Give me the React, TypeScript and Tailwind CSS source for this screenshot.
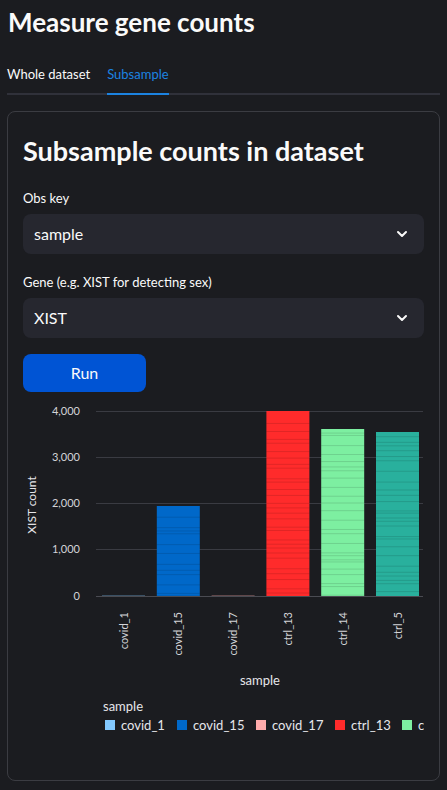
import { ChevronDown } from "lucide-react";

const bars = [
  { name: "covid_1", color: "#83c9ff", top: 195 },
  { name: "covid_15", color: "#0068c9", top: 106 },
  { name: "covid_17", color: "#ffabab", top: 195 },
  { name: "ctrl_13", color: "#ff2b2b", top: 11 },
  { name: "ctrl_14", color: "#7defa1", top: 29 },
  { name: "ctrl_5", color: "#29b09d", top: 32 },
];

// simple seeded noise for the stacked stripes
function stripes(seed: number, top: number, bottom: number) {
  const out: number[] = [];
  let s = seed;
  let y = top + 2;
  while (y < bottom) {
    s = (s * 9301 + 49297) % 233280;
    y += 2 + (s / 233280) * 9;
    if (y < bottom) out.push(y);
  }
  return out;
}

function Select({ value }: { value: string }) {
  return (
    <div className="flex h-10 items-center justify-between rounded-lg bg-[#26272f] pl-[11px] pr-[14px] text-[16px] text-[#fafafa]">
      <span>{value}</span>
      <ChevronDown size={16} strokeWidth={3} className="text-[#fafafa]" />
    </div>
  );
}

function Chart() {
  const grid = [
    { y: 11, label: "4,000" },
    { y: 57, label: "3,000" },
    { y: 103, label: "2,000" },
    { y: 149, label: "1,000" },
    { y: 196, label: "0" },
  ];
  const legend = [
    { sq: 82, tx: 98, name: "covid_1", color: "#83c9ff" },
    { sq: 154, tx: 170, name: "covid_15", color: "#0068c9" },
    { sq: 233, tx: 249, name: "covid_17", color: "#ffabab" },
    { sq: 312, tx: 328, name: "ctrl_13", color: "#ff2b2b" },
    { sq: 379, tx: 395, name: "ctrl_14", color: "#7defa1" },
  ];
  return (
    <svg width={401} height={345} viewBox="0 0 401 345" className="block overflow-hidden" style={{ fontFamily: "Lato, 'Noto Sans', sans-serif" }}>
      {grid.slice(0, 4).map((g) => (
        <line key={g.y} x1={73} x2={400} y1={g.y + 0.5} y2={g.y + 0.5} stroke="#3a3b42" strokeWidth={1} />
      ))}
      {grid.map((g) => (
        <text key={g.label} x={57} y={g.y + 4} textAnchor="end" fontSize={11} fill="#d3d4d8">
          {g.label}
        </text>
      ))}
      {bars.map((b, i) => {
        const x = 79 + i * 54.8;
        const tiny = 196 - b.top < 5;
        return (
          <g key={b.name}>
            <rect x={x} y={b.top} width={43} height={196 - b.top} fill={b.color} opacity={tiny ? 0.3 : 1} />
            {!tiny &&
              stripes(i * 77 + 13, b.top, 196).map((y, k) => (
                <line key={k} x1={x} x2={x + 43} y1={y} y2={y} stroke="#000" strokeOpacity={0.12} strokeWidth={1} />
              ))}
            <text
              transform={`translate(${x + 25.5},212) rotate(-90)`}
              textAnchor="end"
              fontSize={11}
              fill="#d3d4d8"
            >
              {b.name}
            </text>
          </g>
        );
      })}
      <line x1={73} x2={400} y1={196.5} y2={196.5} stroke="#4a4b52" strokeWidth={1} />
      <text transform="translate(13,105) rotate(-90)" textAnchor="middle" fontSize={12} fill="#e6e6ea">
        XIST count
      </text>
      <text x={237} y={285} textAnchor="middle" fontSize={13} fill="#e6e6ea">
        sample
      </text>
      <text x={80} y={311} fontSize={13} fill="#e6e6ea">
        sample
      </text>
      {legend.map((l) => (
        <g key={l.name}>
          <rect x={l.sq} y={320} width={10} height={10} fill={l.color} />
          <text x={l.tx} y={329.5} fontSize={13} fill="#e6e6ea">
            {l.name}
          </text>
        </g>
      ))}
    </svg>
  );
}

export default function App() {
  return (
    <div className="min-h-[790px] bg-[#1b1c20] px-[7px] text-[#fafafa]" style={{ fontFamily: "Lato, 'Noto Sans', sans-serif" }}>
      <h1 className="pt-[4px] pl-[1px] text-[26px] font-bold leading-[36px]">Measure gene counts</h1>

      {/* Tabs */}
      <div className="mt-[23px] flex gap-[17px] border-b-2 border-[#30313a] text-[13px]">
        <div className="pt-[2px] pb-[8px] text-[#fafafa]">Whole dataset</div>
        <div className="-mb-[2px] border-b-2 border-[#1c83e1] pt-[2px] pb-[8px] text-[#1c83e1]">Subsample</div>
      </div>

      {/* Card */}
      <div className="mt-[16px] flex h-[670px] flex-col rounded-lg border border-[#3b3c42] px-[15px]">
        <h2 className="mt-[21px] text-[27px] font-bold leading-[36px]">Subsample counts in dataset</h2>

        <label className="mt-[19px] text-[13px] leading-[20px]">Obs key</label>
        <div className="mt-[6px]">
          <Select value="sample" />
        </div>

        <label className="mt-[18px] text-[13px] leading-[20px]">Gene (e.g. XIST for detecting sex)</label>
        <div className="mt-[6px]">
          <Select value="XIST" />
        </div>

        <button className="mt-[16px] h-[38px] w-[123px] rounded-lg bg-[#0054d4] text-[16px] text-[#fafafa]">Run</button>

        <div className="mt-[8px]">
          <Chart />
        </div>
      </div>
    </div>
  );
}
